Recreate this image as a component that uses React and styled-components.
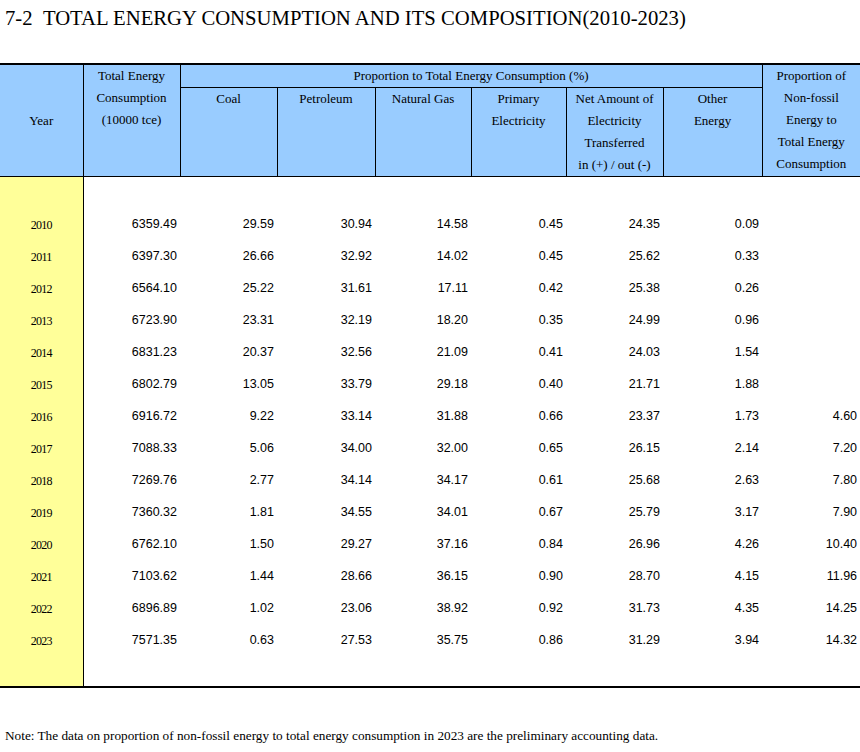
import React from 'react';
import styled, { createGlobalStyle } from 'styled-components';

const GlobalStyle = createGlobalStyle`
  html, body {
    margin: 0;
    padding: 0;
    background: #fff;
  }
`;

const rows = [
  ['2010', '6359.49', '29.59', '30.94', '14.58', '0.45', '24.35', '0.09', ''],
  ['2011', '6397.30', '26.66', '32.92', '14.02', '0.45', '25.62', '0.33', ''],
  ['2012', '6564.10', '25.22', '31.61', '17.11', '0.42', '25.38', '0.26', ''],
  ['2013', '6723.90', '23.31', '32.19', '18.20', '0.35', '24.99', '0.96', ''],
  ['2014', '6831.23', '20.37', '32.56', '21.09', '0.41', '24.03', '1.54', ''],
  ['2015', '6802.79', '13.05', '33.79', '29.18', '0.40', '21.71', '1.88', ''],
  ['2016', '6916.72', '9.22', '33.14', '31.88', '0.66', '23.37', '1.73', '4.60'],
  ['2017', '7088.33', '5.06', '34.00', '32.00', '0.65', '26.15', '2.14', '7.20'],
  ['2018', '7269.76', '2.77', '34.14', '34.17', '0.61', '25.68', '2.63', '7.80'],
  ['2019', '7360.32', '1.81', '34.55', '34.01', '0.67', '25.79', '3.17', '7.90'],
  ['2020', '6762.10', '1.50', '29.27', '37.16', '0.84', '26.96', '4.26', '10.40'],
  ['2021', '7103.62', '1.44', '28.66', '36.15', '0.90', '28.70', '4.15', '11.96'],
  ['2022', '6896.89', '1.02', '23.06', '38.92', '0.92', '31.73', '4.35', '14.25'],
  ['2023', '7571.35', '0.63', '27.53', '35.75', '0.86', '31.29', '3.94', '14.32'],
];

const widths = [83, 97, 97, 98, 96, 95, 97, 99, 98];

const subHeads = [
  ['Coal'],
  ['Petroleum'],
  ['Natural Gas'],
  ['Primary', 'Electricity'],
  ['Net Amount of', 'Electricity', 'Transferred', 'in (+) / out (-)'],
  ['Other', 'Energy'],
];

const App = () => {
  return (
    <Page>
      <GlobalStyle />
      <Title>7-2&nbsp;&nbsp;TOTAL ENERGY CONSUMPTION AND ITS COMPOSITION(2010-2023)</Title>
      <Table>
        <colgroup>
          {widths.map((w, i) => <col key={i} style={{ width: w }} />)}
        </colgroup>
        <thead>
          <HeadRow $h={22}>
            <HeadCell rowSpan={2} $middle>Year</HeadCell>
            <HeadCell rowSpan={2}>Total Energy<br />Consumption<br />(10000 tce)</HeadCell>
            <HeadCell colSpan={6}>Proportion to Total Energy Consumption (%)</HeadCell>
            <HeadCell rowSpan={2} $last>Proportion of<br />Non-fossil<br />Energy to<br />Total Energy<br />Consumption</HeadCell>
          </HeadRow>
          <HeadRow $h={88}>
            {subHeads.map((lines, i) => (
              <HeadCell key={i}>
                {lines.map((l, j) => <Line key={j}>{l}</Line>)}
              </HeadCell>
            ))}
          </HeadRow>
        </thead>
        <tbody>
          <BodyRow $h={31}>
            <YearCell />
            <td colSpan={8} />
          </BodyRow>
          {rows.map((r) => (
            <BodyRow key={r[0]} $h={32}>
              <YearCell><YearText>{r[0]}</YearText></YearCell>
              {r.slice(1).map((v, i) => <NumCell key={i}>{v}</NumCell>)}
            </BodyRow>
          ))}
          <BodyRow $h={31}>
            <YearCell />
            <td colSpan={8} />
          </BodyRow>
        </tbody>
      </Table>
      <Note>Note: The data on proportion of non-fossil energy to total energy consumption in 2023 are the preliminary accounting data.</Note>
    </Page>
  );
};

export default App;

const Page = styled.div`
  width: 860px;
  height: 752px;
  overflow: hidden;
  font-family: "Liberation Serif", "Times New Roman", serif;
  color: #000;
`;

const Title = styled.h1`
  margin: 0;
  padding: 6px 0 0 5px;
  height: 63px;
  box-sizing: border-box;
  font-size: 20.7px;
  font-weight: normal;
  line-height: 24px;
  white-space: nowrap;
`;

const Table = styled.table`
  width: 860px;
  table-layout: fixed;
  border-collapse: collapse;
  border-top: 2px solid #000;
  border-bottom: 2px solid #000;
`;

const HeadRow = styled.tr`
  height: ${(p) => p.$h}px;
`;

const HeadCell = styled.th`
  background: #99ccff;
  border-right: ${(p) => (p.$last ? 'none' : '1px solid #000')};
  border-bottom: 1px solid #000;
  padding: 0;
  font-size: 13px;
  font-weight: normal;
  line-height: 22px;
  text-align: center;
  vertical-align: ${(p) => (p.$middle ? 'middle' : 'top')};
`;

const Line = styled.div`
  white-space: nowrap;
`;

const BodyRow = styled.tr`
  height: ${(p) => p.$h}px;
`;

const YearCell = styled.td`
  background: #ffff99;
  border-right: 1px solid #000;
  padding: 0;
  text-align: center;
  vertical-align: middle;
`;

const YearText = styled.span`
  font-family: "Liberation Serif", "Times New Roman", serif;
  font-size: 12px;
  letter-spacing: -0.7px;
`;

const NumCell = styled.td`
  padding: 0 3px 0 0;
  text-align: right;
  vertical-align: middle;
  font-family: "Liberation Sans", Arial, sans-serif;
  font-size: 12.5px;
`;

const Note = styled.p`
  margin: 40px 0 0 5px;
  font-size: 13.25px;
  line-height: 16px;
  white-space: nowrap;
`;
